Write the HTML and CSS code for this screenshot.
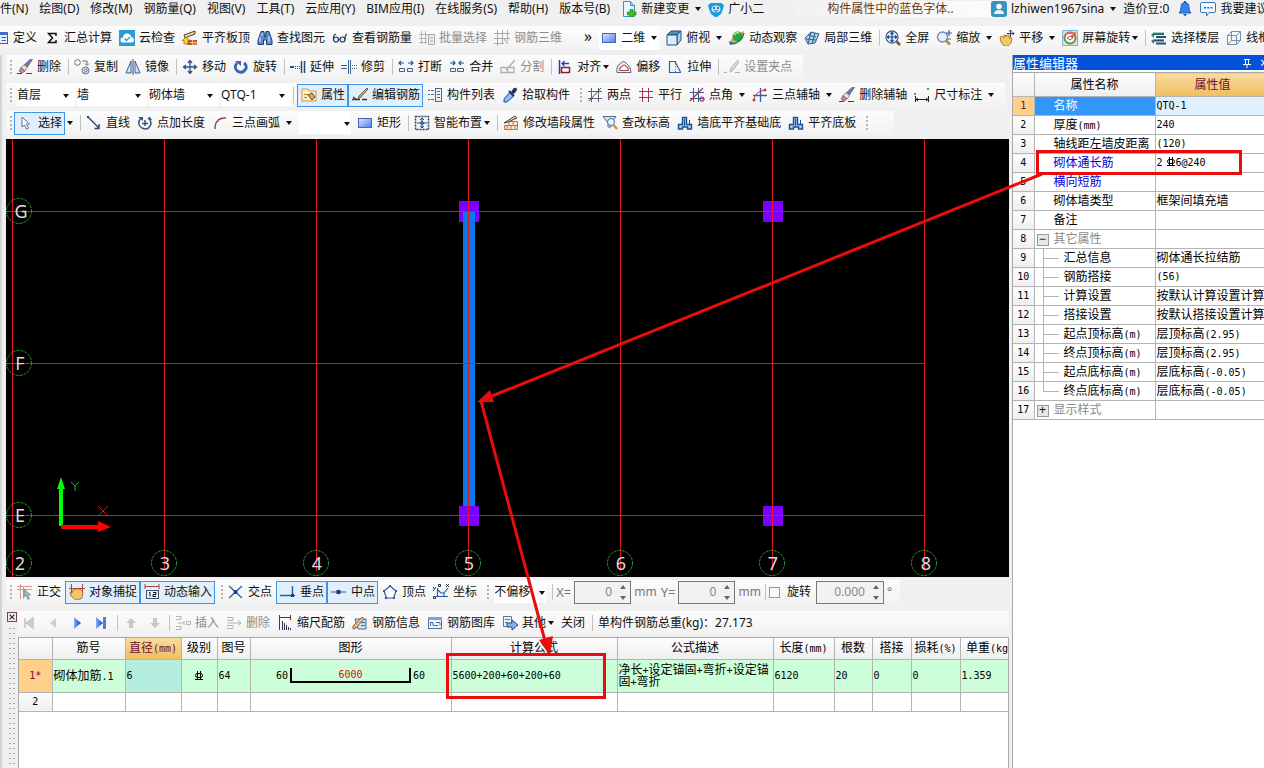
FILE: index.html
```html
<!DOCTYPE html>
<html lang="zh-CN">
<head>
<meta charset="utf-8">
<title>钢筋算量</title>
<link rel="stylesheet" href="styles.css">
</head>
<body>
<svg class="defs" aria-hidden="true">
<defs>
<linearGradient id="gb" x1="0" y1="0" x2="1" y2="1"><stop offset="0" stop-color="#dbe7ff"/><stop offset="1" stop-color="#4f7bea"/></linearGradient>
<linearGradient id="gp" x1="0" y1="0" x2="1" y2="0"><stop offset="0" stop-color="#7fb0ff"/><stop offset="1" stop-color="#0b3fd0"/></linearGradient>
</defs>
<symbol id="newdoc" viewBox="0 0 16 16"><path d="M2.500.500h7l4 4v11h-11z" fill="#e9f6ff" stroke="#3a90cc"/><path d="M9.500.500v4h4" fill="#9fd0f2" stroke="#3a90cc"/><path d="M9 8.500h3v2.500h3v3h-3v2H9v-2H6.500v-3H9z" fill="#3dc02c" stroke="#1c7d15" stroke-width=".7"/></symbol>
<symbol id="robot" viewBox="0 0 16 16"><path d="M0 4l3-2h10l3 2-1 4-2 5-4 3H7l-4-3-2-5z" fill="#189be0"/><ellipse cx="8" cy="8" rx="4.500" ry="3.500" fill="#c4e8fb"/><circle cx="6" cy="7" r="1" fill="#0b4f80"/><circle cx="10" cy="7" r="1" fill="#0b4f80"/><path d="M6 9.500q2 1.500 4 0" stroke="#0767a8" fill="none"/></symbol>
<symbol id="user" viewBox="0 0 16 16"><rect width="16" height="16" rx="3" fill="#3993bd"/><circle cx="8" cy="5.500" r="2.800" fill="#fff"/><path d="M3 13q0-4 5-4t5 4z" fill="#e5f4fb"/></symbol>
<symbol id="bell" viewBox="0 0 16 16"><path d="M8 1.500q4 0 4 5 0 4 2 5.500H2q2-1.500 2-5.500 0-5 4-5z" fill="#3484ee" stroke="#1b5dc0"/><path d="M6 13h4l-2 2.500zM7 0h2v2H7z" fill="#1b5dc0"/></symbol>
<symbol id="chat" viewBox="0 0 16 16"><path d="M2 1.500h12q1.500 0 1.500 1.500v7q0 1.500-1.500 1.500H9L6.500 15v-3.500H2Q.500 11.500.500 10V3Q.500 1.500 2 1.500z" fill="#f4f9ff" stroke="#3a78b8"/><path d="M4 6h2v1.500H4zM7.200 6h2v1.500h-2zM10.500 6h2v1.500h-2z" fill="#2b67a8"/></symbol>
<symbol id="define" viewBox="0 0 16 16"><rect x="1.500" y="2.500" width="13" height="11" fill="#eef4ff" stroke="#315fb0"/><path d="M1 2h14v3H1z" fill="#3c70cc"/><path d="M3.500 7.500h3M3.500 10.500h3M8.500 7.500H13M8.500 10.500H13" stroke="#315fb0"/></symbol>
<symbol id="sigma" viewBox="0 0 16 16"><path d="M12 6V3.500H4.500L8.500 8l-4 4.500H12V10" fill="none" stroke="#111" stroke-width="1.500"/></symbol>
<symbol id="cloud" viewBox="0 0 16 16"><rect width="16" height="16" fill="#2b9bd6"/><path d="M3.500 12.500Q1 12 1.500 9.500 2 7.500 4 7.500 4.500 3.500 8 3.500t4.300 3.500Q15 7.500 15 10t-2.500 2.500z" fill="#fff"/><path d="M5.500 8.500l2 2 3.500-3.500" fill="none" stroke="#2b9bd6" stroke-width="1.400"/></symbol>
<symbol id="slabtop" viewBox="0 0 16 16"><path d="M2 5l11-4v3L3 8z" fill="#f4d56d" stroke="#454545"/><path d="M5 10h10v5H5z" fill="#bf5b23"/><path d="M8 12.500h7M10.500 10v5M13 12v3" stroke="#f5b78c"/><path d="M0 10.500l4-3 4 3H6v3.500H2v-3.500z" fill="#ffd42a" stroke="#806000" stroke-width=".6"/></symbol>
<symbol id="binoc" viewBox="0 0 16 16"><path d="M4 1.500h3l.500 5.500h1L9 1.500h3l3 9v4h-5.500V10h-3v4.500H1v-4z" fill="#5b8ad0" stroke="#233f78"/><path d="M3 7v5M12 6v6M5 3v3" stroke="#dcecff"/></symbol>
<symbol id="glasses" viewBox="0 0 16 16"><circle cx="4" cy="9.500" r="2.500" fill="#ddf0ff" stroke="#26384f" stroke-width="1.200"/><circle cx="10.500" cy="9.500" r="2.500" fill="#ddf0ff" stroke="#26384f" stroke-width="1.200"/><path d="M1.500 9Q1 5 4 4M13 9.500Q13 5 15 4M6.500 9.500H8" fill="none" stroke="#26384f" stroke-width="1.200"/></symbol>
<symbol id="batch" viewBox="0 0 16 16"><path d="M0 4.500h10M0 8.500h8M0 12.500h8M2.500 1v13M6.500 1v13" stroke="#b5b5b5" fill="none"/><path d="M9.500 4.500h6v10h-6z" fill="#eee" stroke="#aaa"/><path d="M11 8h3M11 11h3" stroke="#aaa"/></symbol>
<symbol id="grid3" viewBox="0 0 16 16"><path d="M0 3.500h16M0 8.500h16M0 13.500h10M3.500 0v16M8.500 0v14M13.500 0v11" stroke="#aaa" fill="none"/><path d="M10 9l4 5" stroke="#999"/></symbol>
<symbol id="rect" viewBox="0 0 16 16"><rect x="1.500" y="3.500" width="13" height="9" fill="url(#gb)" stroke="#4a65b8"/></symbol>
<symbol id="cube" viewBox="0 0 16 16"><path d="M1 5l4-4h10l-4 4z" fill="#3e93bf" stroke="#2b4e80"/><path d="M11 5l4-4v9l-4 5z" fill="#a9d4e8" stroke="#2b4e80"/><path d="M1 5h10v10H1z" fill="#dcecf8" stroke="#2b4e80"/></symbol>
<symbol id="orbit" viewBox="0 0 16 16"><path d="M1 13Q3 4 15 1q-1 9-9 11z" fill="#e8a33d"/><circle cx="8.500" cy="6.500" r="5" fill="#2aa047"/><path d="M5 5q2-3 5-2" fill="none" stroke="#b3f2a5" stroke-width="1.500"/><path d="M2 14Q13 13 15 3" fill="none" stroke="#2d7f3f" stroke-width="1.300"/><path d="M0 11l1 4 4-2z" fill="#335cb3"/></symbol>
<symbol id="part3" viewBox="0 0 16 16"><path d="M1 8l6-6 8 2-4 9-7 1z" fill="#a9d4e8" stroke="#315f91"/><path d="M4 5l8 2M7 2L4 14M11 3L8 14M2 9l10 1" stroke="#315f91" fill="none"/></symbol>
<symbol id="full" viewBox="0 0 16 16"><circle cx="7" cy="7" r="6" fill="#e4f0ff" stroke="#54688c" stroke-width="1.300"/><path d="M7 2v10M2 7h10M5.500 4L7 2.300 8.500 4M5.500 10L7 11.700 8.500 10M4 5.500L2.300 7 4 8.500M10 5.500L11.700 7 10 8.500" fill="none" stroke="#1b469b" stroke-width="1.200"/><path d="M11.500 11.500L15 15" stroke="#7c5530" stroke-width="2.500"/></symbol>
<symbol id="zoomi" viewBox="0 0 16 16"><circle cx="6.500" cy="7" r="5" fill="#e6f1ff" stroke="#6f87ab" stroke-width="1.300"/><path d="M10 10.500l4 4" stroke="#c08438" stroke-width="2.600"/><path d="M13 0v6M10 3h6M15 9h-4" stroke="#2f5fae" stroke-width="1.200"/></symbol>
<symbol id="pan" viewBox="0 0 16 16"><path d="M1 7l2-1 2 2V5h2v2l1-2h2v3l3 0-1 5-3 3H5L2 12z" fill="#f5c867" stroke="#9c6d20" stroke-width=".8"/><path d="M11.500 0v7M8 3.500h7M10 1.500L11.500 0 13 1.500M13.500 2L15 3.500 13.500 5" fill="none" stroke="#345"/></symbol>
<symbol id="srot" viewBox="0 0 16 16"><rect x=".500" y=".500" width="15" height="15" fill="#e9dcc9" stroke="#7db4d8"/><circle cx="8" cy="8" r="5.500" fill="#fff" stroke="#36a055" stroke-width="1.800"/><path d="M2.500 8a5.500 5.500 0 0 1 9-4M13 2v4H9" fill="none" stroke="#e0665d" stroke-width="1.800"/><path d="M5 8l3-2 3 2-3 2z" fill="none" stroke="#d6453a"/></symbol>
<symbol id="floors" viewBox="0 0 16 16"><path d="M3 4h10M5 7h10M3 10.500h10M5 13.500h10" stroke="#23537c" stroke-width="2"/><path d="M3 3h10M5 9.500h8" stroke="#49b26c"/><path d="M0 5l3-3v6zM0 11l3-2v5z" fill="#347f6a"/></symbol>
<symbol id="wire" viewBox="0 0 16 16"><path d="M1.500 5.500h9v9h-9zM1.500 5.500l4-4h9l-4 4M14.500 1.500v9l-4 4M5.500 1.500v9h9M5.500 10.500l-4 4" fill="none" stroke="#7491ad"/></symbol>
<symbol id="brush" viewBox="0 0 16 16"><path d="M15.500 0.500L10 8.500 7 6l6.500-6z" fill="#6a7fb0" stroke="#394d78" stroke-width=".6"/><path d="M7 5.500l3.500 3L8 12 4 8.500z" fill="#f0dfc6" stroke="#7b6450" stroke-width=".7"/><path d="M4 8.500L8 12l-2 1.500H4L2 12z" fill="#b98aa9" stroke="#6b4660" stroke-width=".6"/><path d="M0 14.500h5M9 14.500h6" stroke="#24468c" stroke-width="1.200"/></symbol>
<symbol id="copy" viewBox="0 0 16 16"><circle cx="3.500" cy="3.500" r="2.800" fill="#fff" stroke="#5d7591"/><circle cx="11.500" cy="11.500" r="3.500" fill="#dfe8f0" stroke="#5d7591"/><path d="M9.500 11.500l4-2M10 13.500l4-2M8 2h5v4M11 4.500l2 2 2-2" fill="none" stroke="#5d7591"/></symbol>
<symbol id="mirror" viewBox="0 0 16 16"><path d="M6 2v12H1zM10 2v12h5z" fill="#d6e6f7" stroke="#3b5f93"/><path d="M8 0v16" stroke="#304b7b"/></symbol>
<symbol id="move" viewBox="0 0 16 16"><path d="M8 2v12M2 8h12M6 4l2-2.500L10 4M6 12l2 2.500 2-2.500M4 6L1.500 8 4 10M12 6l2.500 2-2.500 2" fill="none" stroke="#315384" stroke-width="1.300"/></symbol>
<symbol id="rotate" viewBox="0 0 16 16"><path d="M4 4Q0 9 5 12.500 10 15 13 9.500 14 6 11 4" fill="none" stroke="#3564b8" stroke-width="2.800"/><path d="M2 2h6v5z" fill="#3564b8"/></symbol>
<symbol id="extend" viewBox="0 0 16 16"><path d="M0 8h4" stroke="#1e4f9f" stroke-width="2"/><path d="M5 7.500h5M5 9.500h5" stroke="#1e4f9f" stroke-dasharray="1 1"/><path d="M11.500 2v12M14.500 2v12" stroke="#25497e" stroke-width="1.500"/></symbol>
<symbol id="trim" viewBox="0 0 16 16"><path d="M0 6.500h6M0 9.500h6M7.500 1v14M9.500 1v14" stroke="#35618e"/><path d="M11 6.500h5M11 9.500h5" stroke="#35618e" stroke-dasharray="1 1"/></symbol>
<symbol id="break" viewBox="0 0 16 16"><path d="M1 4h5M10 4h5M3 2L1 4l2 2M13 2l2 2-2 2" fill="none" stroke="#2a4f9b" stroke-width="1.200"/><path d="M1.500 9.500h5v3h-5zM9.500 9.500h5v3h-5z" fill="none" stroke="#45628b"/></symbol>
<symbol id="merge" viewBox="0 0 16 16"><path d="M1 4h5M10 4h5M4 2l2 2-2 2M12 2l-2 2 2 2" fill="none" stroke="#2a4f9b" stroke-width="1.200"/><path d="M1.500 9.500h5v3h-5zM8.500 9.500h6v3h-6z" fill="none" stroke="#45628b"/></symbol>
<symbol id="split" viewBox="0 0 16 16"><path d="M1 8.500h13v5H1zM7.500 8.500v5M15 1L6 11" fill="none" stroke="#b0b0b0" stroke-width="1.300"/></symbol>
<symbol id="align" viewBox="0 0 16 16"><path d="M2.500 1v14" stroke="#2043b7" stroke-width="1.500"/><rect x="4.500" y="8.500" width="8" height="5" fill="#fff" stroke="#8c1d2f" stroke-width="1.500"/><path d="M5 4.500h7M7.500 2L5 4.500 7.500 7" fill="none" stroke="#2043b7" stroke-width="1.300"/></symbol>
<symbol id="offset" viewBox="0 0 16 16"><path d="M1 13.500Q0 7 4 5q3-5 7 0 4 3 4 8.500z" fill="#e8eef4" stroke="#536b85"/><path d="M4 11.500q-1-3 2-4 2-3 4 0 3 1 2 4z" fill="#fff" stroke="#c04444" stroke-width="1.200"/></symbol>
<symbol id="stretch" viewBox="0 0 16 16"><path d="M8 2.500H2.500v11H14M8 2.500L13.500 13" fill="none" stroke="#315f9f" stroke-width="1.200"/><path d="M8.500 2v12" stroke="#315f9f" stroke-dasharray="1 1.500"/></symbol>
<symbol id="gripset" viewBox="0 0 16 16"><path d="M14 1L7 9l-1 4 3-2 6-8" fill="#ddd" stroke="#b0b0b0"/><path d="M0 13.500h3M11 13.500h5" stroke="#b0b0b0"/></symbol>
<symbol id="props" viewBox="0 0 16 16"><path d="M1 2h6l1 2h7v10H1z" fill="#fff0c5" stroke="#ca9c3d"/><path d="M3 7.500h4M3 10.500h3" stroke="#bf7a20"/><path d="M7 8l4-2 3 4-3 3z" fill="#d7a758" stroke="#67442b"/></symbol>
<symbol id="pen" viewBox="0 0 16 16"><path d="M15 1L7 9l-1 3 3-2 7-8z" fill="#d2ac63" stroke="#504939" stroke-width=".8"/><path d="M0 12.500h8M10 12.500h5M1 10l3 2" stroke="#303840" stroke-width="1.300"/></symbol>
<symbol id="list" viewBox="0 0 16 16"><path d="M1 3.500h2M4 3.500h3M1 7.500h2M4 7.500h3M1 12.500h2M4 12.500h3" stroke="#526787"/><rect x="8.500" y="1.500" width="6" height="13" fill="#e9f1fc" stroke="#526787"/><path d="M10 4.500h3M10 7.500h3M10 10.500h3" stroke="#526787"/></symbol>
<symbol id="pick" viewBox="0 0 16 16"><path d="M9 5l3-4q3-1 3 2l-3 4z" fill="#17335e"/><path d="M8 5l4 4-7 6H2v-3z" fill="#8db9ee" stroke="#214f96"/><path d="M7 4l5 5" stroke="#17335e" stroke-width="2"/></symbol>
<symbol id="twopt" viewBox="0 0 16 16"><path d="M1 4.500h14M1 11.500h14M4.500 1v14M11.500 1v14" stroke="#59608a"/><path d="M2 14L14 1" stroke="#315f3f"/></symbol>
<symbol id="para" viewBox="0 0 16 16"><path d="M1 4.500h14M1 10.500h14" stroke="#315f9f"/><path d="M4.500 1v14M10.500 1v14" stroke="#9b344a"/></symbol>
<symbol id="ptang" viewBox="0 0 16 16"><path d="M1 5.500h14M1 11.500h14M4.500 1v14M9.500 1v14" stroke="#315f9f"/><path d="M1 14L14 1M11 12a2 2 0 1 0 4 0 2 2 0 1 0-4 0" fill="none" stroke="#b32d45" stroke-width="1.200"/></symbol>
<symbol id="threeax" viewBox="0 0 16 16"><path d="M1 8.500h14M8.500 1v14" stroke="#315f9f" stroke-width="1.300"/><path d="M2 14Q2 4 14 3" fill="none" stroke="#c64037"/><circle cx="2" cy="13" r="1.500" fill="#c64037"/><circle cx="13" cy="3" r="1.500" fill="#c64037"/></symbol>
<symbol id="dim" viewBox="0 0 16 16"><path d="M1.500 9v6M14.500 9v6M1 12.500h13M4 11l-2 1.500L4 14M12 11l2 1.500-2 1.500" fill="none" stroke="#222"/><path d="M0 6h2v2H0zM13 1h2v2h-2z" fill="#4aa852"/></symbol>
<symbol id="cursor" viewBox="0 0 16 16"><path d="M4 2v10l2.500-2 2 4 2-1-2-4h3z" fill="#fff" stroke="#6e6e80"/></symbol>
<symbol id="line" viewBox="0 0 16 16"><path d="M2 2l11 11M13 9v4.500H8.500" fill="none" stroke="#24477c" stroke-width="1.400"/><path d="M1 1h2v2H1z" fill="#24477c"/></symbol>
<symbol id="ptlen" viewBox="0 0 16 16"><path d="M4 3Q-1 9 5 13q7 3 9-4 0-4-3-6M8 5v6M5 8.500h6" fill="none" stroke="#33547f" stroke-width="1.500"/><path d="M1 2h5v4zM12 1v4h3" fill="#33547f"/></symbol>
<symbol id="arc" viewBox="0 0 16 16"><path d="M3 14Q3 3 13 3" fill="none" stroke="#7b4a52" stroke-width="1.300"/><path d="M2 12h2v2H2zM5 5h2v2H5zM12 2h2v2h-2z" fill="#c57459"/></symbol>
<symbol id="smart" viewBox="0 0 16 16"><rect x="1.500" y="1.500" width="13" height="13" fill="none" stroke="#29405f" stroke-width="1.500" stroke-dasharray="2 1"/><path d="M8 3v10M3 8h10M6 5l2-2 2 2M6 11l2 2 2-2" fill="none" stroke="#29405f"/><circle cx="8" cy="8" r="2" fill="#2d69bb"/></symbol>
<symbol id="wall" viewBox="0 0 16 16"><path d="M3.500 6.500h11v8h-13v-4h13M6 6.500v4M10 6.500v4M8 10.500v4M12 10.500v4M4 10.500v4" fill="#ffe6c8" stroke="#bd7545"/><path d="M1 8l11-7 2 2L5 7z" fill="#f5cf7b" stroke="#3d4a50"/></symbol>
<symbol id="chkh" viewBox="0 0 16 16"><path d="M1 1.500h13L9 8v4H6V8z" fill="#d7e3f2" stroke="#536b91"/><circle cx="9" cy="7" r="3.500" fill="#eaf5ff" stroke="#536b91"/><path d="M11.500 10l3.500 4" stroke="#cf8b34" stroke-width="2.300"/></symbol>
<symbol id="base" viewBox="0 0 16 16"><path d="M1.500 14V9.500h4v-7h4v7h5V14h-4v-2h-5v2z" fill="#a9d1f2" stroke="#1c4d8b" stroke-width="1.400"/><path d="M7.500 4v7M12.500 5v4" fill="none" stroke="#1c4d8b"/></symbol>
<symbol id="ortho" viewBox="0 0 16 16"><path d="M0 2.500h15M3.500 0v15M0 5.500h15M6.500 3v12" stroke="#d99892"/><path d="M7 5v8l2-1.500 2 4 1.500-1-2-3.500h3z" fill="#9db5b8" stroke="#6c7880" stroke-width=".6"/></symbol>
<symbol id="osnap" viewBox="0 0 16 16"><path d="M2.500 0v9M13.500 0v9M0 4.500h16" stroke="#a8443b"/><path d="M1 8l2 1 1-3 2-1h5l3 3-1 6-4 2H7l-5-4z" fill="#f4c669" stroke="#94651b" stroke-width=".8"/></symbol>
<symbol id="dyn" viewBox="0 0 16 16"><path d="M1 2.500h14M1 0v5M15 0v5" stroke="#a8443b"/><rect x="2.500" y="6.500" width="12" height="8" fill="#e7eff8" stroke="#40526d"/><path d="M5 8.500h1v4M9 8.500h3v2H9v2h3" fill="none" stroke="#111"/></symbol>
<symbol id="cross" viewBox="0 0 16 16"><path d="M1 2l13 12M14 2L1 14" stroke="#2c5ba5" stroke-width="1.300"/><circle cx="7.500" cy="8" r="2" fill="#173a80"/></symbol>
<symbol id="perp" viewBox="0 0 16 16"><path d="M0 11.500h15M12.500 2v10" stroke="#2c5ba5" stroke-width="1.400"/><path d="M11 10h3v3h-3z" fill="#173a80"/></symbol>
<symbol id="mid" viewBox="0 0 16 16"><path d="M0 8h15" stroke="#2c5ba5"/><path d="M5.500 6h4v4h-4z" fill="#173a80"/></symbol>
<symbol id="vertex" viewBox="0 0 16 16"><path d="M8 2l6 5-2.500 7h-7L2 7z" fill="#fff" stroke="#2c5ba5" stroke-width="1.200"/><path d="M7 1h2v2H7zM1 6h2v2H1zM13 6h2v2h-2zM3 13h2v2H3zM11 13h2v2h-2z" fill="#2c5ba5"/></symbol>
<symbol id="coord" viewBox="0 0 16 16"><path d="M4.500 4v9M3 12.500h12M5 6l3 3h3l4-5M11 9v3" fill="none" stroke="#2c5ba5" stroke-width="1.200"/><path d="M0 3l1.500 2M3 3L0 7M13 0l3 3M16 0l-3 3M5.500.500h2v2h-2zM.500 12.500h2v2h-2z" fill="none" stroke="#28323f"/></symbol>
<symbol id="first" viewBox="0 0 16 16"><path d="M4 3v10M5.500 8L12 3v10z" fill="#cfcfcf" stroke="#c6c6c6" stroke-width="1.600"/></symbol>
<symbol id="prev" viewBox="0 0 16 16"><path d="M5 8l6-5v10z" fill="#cfcfcf"/></symbol>
<symbol id="play" viewBox="0 0 16 16"><path d="M5 2l7 6-7 6z" fill="url(#gp)"/></symbol>
<symbol id="last" viewBox="0 0 16 16"><path d="M3 2l7 6-7 6z" fill="url(#gp)"/><path d="M10 2h3v12h-3z" fill="#6478b8"/></symbol>
<symbol id="up" viewBox="0 0 16 16"><path d="M8 3l5 5h-3v5H6V8H3z" fill="#c8c8c8"/></symbol>
<symbol id="down" viewBox="0 0 16 16"><path d="M8 13l5-5h-3V3H6v5H3z" fill="#c8c8c8"/></symbol>
<symbol id="ins" viewBox="0 0 16 16"><path d="M1 1.500h5v3H1M1 11.500h5v3H1M3 8h6M11.500 6.500h4v3h-4zM9 6v4" fill="none" stroke="#b4b4b4"/></symbol>
<symbol id="rem" viewBox="0 0 16 16"><path d="M1 2.500h6v3H1M1 10.500h6v3H1M2 8h13M12 5.500L15 8l-3 2.500" fill="none" stroke="#b4b4b4"/></symbol>
<symbol id="scale" viewBox="0 0 16 16"><path d="M2.500 0v15M13.500 0v5M3 2.500h10" stroke="#6b2c35"/><path d="M5.500 6v9M7.500 8v7M9.500 10v5M11.500 12v3M13.500 13v2" stroke="#30384a"/></symbol>
<symbol id="info" viewBox="0 0 16 16"><path d="M3 4h11v10H6z" fill="#cce2f3" stroke="#3e6ca1"/><path d="M1 11l9-9 2 2-8 9-3 1z" fill="#e7bb6b" stroke="#665238" stroke-width=".8"/><path d="M9 7.500h4M9 10.500h4" stroke="#3e6ca1"/></symbol>
<symbol id="lib" viewBox="0 0 16 16"><rect x="1.500" y="2.500" width="13" height="11" fill="#edf3fa" stroke="#4b6f9e"/><path d="M1 2h14v3H1z" fill="#80a4d0"/><path d="M3.500 7v4M3 7.500h3v3h5M9 7.500h4v3" fill="none" stroke="#4b6f9e"/></symbol>
<symbol id="other" viewBox="0 0 16 16"><path d="M1.500 1.500h8v10h-8z" fill="#eaf2fb" stroke="#5a78a6"/><path d="M3 4.500h5M3 7.500h3" stroke="#5a78a6"/><path d="M5 8h5V5l6 5-6 5v-3H5z" fill="#87aee6" stroke="#29518f"/></symbol>
<symbol id="pin" viewBox="0 0 10 12"><path d="M2 2.500h6M3.500 2v5M6.500 2v5M1 7.500h8M5 8v3" fill="none" stroke="#fff"/></symbol>
<symbol id="rebar" viewBox="0 0 10 10"><path d="M3.500 2.500h3q2 0 2 2t-2 2h-3q-2 0-2-2t2-2zM3.500 0v8M6.500 0v8M1 8.500h8" fill="none" stroke="#000"/></symbol>
</svg>

<nav class="menu">
<button class="m clipped">文件(N)</button><button class="m">绘图(D)</button><button class="m">修改(M)</button><button class="m">钢筋量(Q)</button><button class="m">视图(V)</button><button class="m">工具(T)</button><button class="m">云应用(Y)</button><button class="m">BIM应用(I)</button><button class="m">在线服务(S)</button><button class="m">帮助(H)</button><button class="m">版本号(B)</button>
<button class="b"><svg class="i"><use href="#newdoc"/></svg>新建变更<i class="arrow"></i></button>
<button class="b"><svg class="i"><use href="#robot"/></svg>广小二</button>
<div class="notice">构件属性中的蓝色字体..</div>
<div class="account">
<button class="b"><svg class="i"><use href="#user"/></svg>lzhiwen1967sina<i class="arrow"></i></button>
<span class="beans">造价豆:0</span>
<button class="b" aria-label="通知"><svg class="i"><use href="#bell"/></svg></button>
<button class="b"><svg class="i"><use href="#chat"/></svg>我要建议</button>
</div>
</nav>

<div class="bar wide">
<button class="b cut"><svg class="i"><use href="#define"/></svg>定义</button>
<button class="b"><svg class="i"><use href="#sigma"/></svg>汇总计算</button>
<button class="b"><svg class="i"><use href="#cloud"/></svg>云检查</button>
<button class="b"><svg class="i"><use href="#slabtop"/></svg>平齐板顶</button>
<button class="b"><svg class="i"><use href="#binoc"/></svg>查找图元</button>
<button class="b"><svg class="i"><use href="#glasses"/></svg>查看钢筋量</button>
<button class="b" disabled><svg class="i"><use href="#batch"/></svg>批量选择</button>
<button class="b" disabled><svg class="i"><use href="#grid3"/></svg>钢筋三维</button>
<button class="more" aria-label="更多">»</button>
<button class="b white"><svg class="i"><use href="#rect"/></svg>二维<i class="arrow"></i></button>
<button class="b"><svg class="i"><use href="#cube"/></svg>俯视<i class="arrow"></i></button>
<button class="b"><svg class="i"><use href="#orbit"/></svg>动态观察</button>
<button class="b"><svg class="i"><use href="#part3"/></svg>局部三维</button>
<i class="sep"></i>
<button class="b"><svg class="i"><use href="#full"/></svg>全屏</button>
<button class="b"><svg class="i"><use href="#zoomi"/></svg>缩放<i class="arrow"></i></button>
<button class="b"><svg class="i"><use href="#pan"/></svg>平移<i class="arrow"></i></button>
<button class="b"><svg class="i"><use href="#srot"/></svg>屏幕旋转<i class="arrow near"></i></button>
<i class="sep"></i>
<button class="b"><svg class="i"><use href="#floors"/></svg>选择楼层</button>
<button class="b"><svg class="i"><use href="#wire"/></svg>线框</button>
</div>

<div class="shell">
<main class="work">
<div class="bars">
<div class="bar">
<i class="grip"></i>
<button class="b"><svg class="i"><use href="#brush"/></svg>删除</button><i class="sep"></i>
<button class="b"><svg class="i"><use href="#copy"/></svg>复制</button>
<button class="b"><svg class="i"><use href="#mirror"/></svg>镜像</button><i class="sep"></i>
<button class="b"><svg class="i"><use href="#move"/></svg>移动</button>
<button class="b"><svg class="i"><use href="#rotate"/></svg>旋转</button><i class="sep"></i>
<button class="b"><svg class="i"><use href="#extend"/></svg>延伸</button>
<button class="b"><svg class="i"><use href="#trim"/></svg>修剪</button><i class="sep"></i>
<button class="b"><svg class="i"><use href="#break"/></svg>打断</button>
<button class="b"><svg class="i"><use href="#merge"/></svg>合并</button>
<button class="b" disabled><svg class="i"><use href="#split"/></svg>分割</button><i class="sep"></i>
<button class="b"><svg class="i"><use href="#align"/></svg>对齐<i class="arrow near"></i></button>
<button class="b"><svg class="i"><use href="#offset"/></svg>偏移</button>
<button class="b"><svg class="i"><use href="#stretch"/></svg>拉伸</button><i class="sep"></i>
<button class="b" disabled><svg class="i"><use href="#gripset"/></svg>设置夹点</button>
</div>
<div class="bar">
<i class="grip"></i>
<span class="combo floor"><select aria-label="楼层"><option>首层</option></select></span>
<span class="combo"><select aria-label="构件大类"><option>墙</option></select></span>
<span class="combo"><select aria-label="构件类型"><option>砌体墙</option></select></span>
<span class="combo"><select aria-label="构件名称"><option>QTQ-1</option></select></span>
<i class="sep lead"></i>
<button class="b on"><svg class="i"><use href="#props"/></svg>属性</button><button class="b on last"><svg class="i"><use href="#pen"/></svg>编辑钢筋</button>
<button class="b"><svg class="i"><use href="#list"/></svg>构件列表</button>
<button class="b"><svg class="i"><use href="#pick"/></svg>拾取构件</button>
<i class="grip inner"></i>
<button class="b"><svg class="i"><use href="#twopt"/></svg>两点</button>
<button class="b"><svg class="i"><use href="#para"/></svg>平行</button>
<button class="b"><svg class="i"><use href="#ptang"/></svg>点角<i class="arrow"></i></button>
<button class="b"><svg class="i"><use href="#threeax"/></svg>三点辅轴<i class="arrow"></i></button>
<button class="b"><svg class="i"><use href="#brush"/></svg>删除辅轴</button>
<button class="b"><svg class="i"><use href="#dim"/></svg>尺寸标注<i class="arrow"></i></button>
</div>
<div class="bar">
<i class="grip snug"></i>
<button class="b on"><svg class="i"><use href="#cursor"/></svg>选择</button><button class="b drop" aria-label="选择方式"><i class="arrow"></i></button><i class="sep"></i>
<button class="b"><svg class="i"><use href="#line"/></svg>直线</button>
<button class="b"><svg class="i"><use href="#ptlen"/></svg>点加长度</button>
<button class="b"><svg class="i"><use href="#arc"/></svg>三点画弧<i class="arrow"></i></button>
<span class="combo small"><select aria-label="画法"><option></option></select></span>
<button class="b"><svg class="i"><use href="#rect"/></svg>矩形</button><i class="sep"></i>
<button class="b"><svg class="i"><use href="#smart"/></svg>智能布置<i class="arrow near"></i></button><i class="sep"></i>
<button class="b"><svg class="i"><use href="#wall"/></svg>修改墙段属性</button>
<button class="b"><svg class="i"><use href="#chkh"/></svg>查改标高</button>
<button class="b"><svg class="i"><use href="#base"/></svg>墙底平齐基础底</button>
<button class="b"><svg class="i"><use href="#base"/></svg>平齐底板</button>
<i class="grip inner tail"></i>
</div>
</div>

<svg class="canvas" role="img" aria-label="轴网平面图">
<g fill="#7b00ff"><path d="M453 62h20v21h-20zM757 62h20v21h-20zM453 367h20v20h-20zM757 367h20v20h-20z"/></g>
<path d="M457 72h12v295h-12z" fill="#0a78ea"/>
<g fill="#e01818" shape-rendering="crispEdges">
<path d="M6 0h1v438h-1zM158 0h1v432h-1zM310 0h1v432h-1zM462 0h1v432h-1zM614 0h1v432h-1zM766 0h1v432h-1zM918 0h1v432h-1z"/>
<rect x="0" y="72" width="919" height="1"/><rect x="0" y="224" width="919" height="1"/><rect x="0" y="376" width="919" height="1"/>
</g>
<g fill="none" stroke="#1f9a2a" stroke-dasharray="3 1"><circle cx="13" cy="72" r="12.500"/><circle cx="13" cy="224" r="12.500"/><circle cx="13" cy="376" r="12.500"/><circle cx="13" cy="424" r="12.500"/><circle cx="158" cy="424" r="12.500"/><circle cx="310" cy="424" r="12.500"/><circle cx="462" cy="424" r="12.500"/><circle cx="614" cy="424" r="12.500"/><circle cx="766" cy="424" r="12.500"/><circle cx="918" cy="424" r="12.500"/></g>
<g class="axis"><text x="15" y="79">G</text><text x="14" y="231">F</text><text x="14" y="383">E</text><text x="14" y="431">2</text><text x="159" y="431">3</text><text x="311" y="431">4</text><text x="463" y="431">5</text><text x="615" y="431">6</text><text x="767" y="431">7</text><text x="920" y="431">8</text></g>
<path d="M53 387V350h-2l4-12 4 12h-2v37z" fill="#0f0"/><path d="M55 386h37v-4l13 6-13 5v-3H55z" fill="#f00"/>
<path d="M65 343l4 4 4-4M69 347v5" stroke="#1fb53a" fill="none"/><path d="M92 367l10 10M102 367l-10 10" stroke="#c91818"/>
</svg>

<div class="bar snap">
<i class="grip"></i>
<button class="b tight"><svg class="i"><use href="#ortho"/></svg>正交</button>
<button class="b on"><svg class="i"><use href="#osnap"/></svg>对象捕捉</button><button class="b on"><svg class="i"><use href="#dyn"/></svg>动态输入</button>
<i class="grip mid"></i>
<button class="b tight"><svg class="i"><use href="#cross"/></svg>交点</button>
<button class="b on"><svg class="i"><use href="#perp"/></svg>垂点</button><button class="b on last"><svg class="i"><use href="#mid"/></svg>中点</button>
<button class="b"><svg class="i"><use href="#vertex"/></svg>顶点</button>
<button class="b"><svg class="i"><use href="#coord"/></svg>坐标</button>
<i class="grip inner"></i>
<span class="combo offset"><select aria-label="偏移方式"><option>不偏移</option></select></span>
<i class="sep lead"></i>
<label class="num" for="ox">X=</label><span class="spin"><input id="ox" value="0" disabled><i class="ud"></i></span><span class="unit">mm</span>
<label class="num" for="oy">Y=</label><span class="spin"><input id="oy" value="0" disabled><i class="ud"></i></span><span class="unit">mm</span>
<i class="sep lead"></i>
<label class="check"><input type="checkbox">旋转</label>
<span class="spin big"><input aria-label="旋转角度" value="0.000" disabled><i class="ud"></i></span><span class="unit">°</span>
</div>

<section class="editor">
<div class="dock"><button class="x" aria-label="关闭面板"><svg viewBox="0 0 10 10"><path d="M2 2l6 6M8 2L2 8" stroke="#4b2530" stroke-width="1.500"/></svg></button><i class="dots"></i></div>
<div class="pane">
<div class="bar edit">
<button class="nav" aria-label="首条" disabled><svg class="i"><use href="#first"/></svg></button><button class="nav" aria-label="上一条" disabled><svg class="i"><use href="#prev"/></svg></button><button class="nav" aria-label="下一条"><svg class="i"><use href="#play"/></svg></button><button class="nav" aria-label="末条"><svg class="i"><use href="#last"/></svg></button><i class="sep"></i><button class="nav" aria-label="上移" disabled><svg class="i"><use href="#up"/></svg></button><button class="nav end" aria-label="下移" disabled><svg class="i"><use href="#down"/></svg></button><i class="sep"></i>
<button class="b" disabled><svg class="i"><use href="#ins"/></svg>插入</button>
<button class="b" disabled><svg class="i"><use href="#rem"/></svg>删除</button>
<button class="b"><svg class="i"><use href="#scale"/></svg>缩尺配筋</button>
<button class="b"><svg class="i"><use href="#info"/></svg>钢筋信息</button>
<button class="b"><svg class="i"><use href="#lib"/></svg>钢筋图库</button>
<button class="b"><svg class="i"><use href="#other"/></svg>其他<i class="arrow near"></i></button>
<button class="b">关闭</button><i class="sep"></i>
<output>单构件钢筋总重(kg)：27.173</output>
</div>
<div class="sheet">
<table class="bars-table">
<colgroup><col class="w33"><col class="w73"><col class="w56"><col class="w36"><col class="w33"><col class="w201"><col class="w166"><col class="w156"><col class="w61"><col class="w38"><col class="w39"><col class="w49"><col class="w60"></colgroup>
<thead><tr><th></th><th>筋号</th><th class="hot">直径<span class="n">(mm)</span></th><th>级别</th><th>图号</th><th>图形</th><th>计算公式</th><th>公式描述</th><th>长度<span class="n">(mm)</span></th><th>根数</th><th>搭接</th><th>损耗<span class="n">(%)</span></th><th>单重<span class="n">(kg)</span></th></tr></thead>
<tbody>
<tr class="sel"><th class="n">1*</th><td>砌体加筋<span class="n">.1</span></td><td class="n cur">6</td><td class="mid"><svg class="rb"><use href="#rebar"/></svg></td><td class="n">64</td><td><div class="shape"><span class="n">60</span><span class="u n">6000</span><span class="n">60</span></div></td><td class="n">5600+200+60+200+60</td><td class="desc">净长<span class="n">+</span>设定锚固<span class="n">+</span>弯折<span class="n">+</span>设定锚固<span class="n">+</span>弯折</td><td class="n">6120</td><td class="n">20</td><td class="n">0</td><td class="n">0</td><td class="n">1.359</td></tr>
<tr><th class="n">2</th><td></td><td class="curline"></td><td></td><td></td><td></td><td></td><td></td><td></td><td></td><td></td><td></td><td></td></tr>
</tbody>
</table>
</div>
</div>
</section>
</main>

<aside class="panel">
<header><h2>属性编辑器</h2><button aria-label="固定"><svg class="pin"><use href="#pin"/></svg></button><button class="close" aria-label="关闭">×</button></header>
<div class="props">
<table>
<colgroup><col class="c1"><col class="c2"><col class="c3"></colgroup>
<thead><tr><th></th><th>属性名称</th><th class="hot">属性值</th></tr></thead>
<tbody>
<tr class="active"><th>1</th><td class="nm">名称</td><td class="n">QTQ-1</td></tr>
<tr><th>2</th><td class="nm">厚度<span class="n">(mm)</span></td><td class="n">240</td></tr>
<tr><th>3</th><td class="nm">轴线距左墙皮距离</td><td class="n">(120)</td></tr>
<tr><th>4</th><td class="nm blue">砌体通长筋</td><td class="n">2<svg class="rb gap"><use href="#rebar"/></svg>6@240</td></tr>
<tr><th>5</th><td class="nm blue">横向短筋</td><td></td></tr>
<tr><th>6</th><td class="nm">砌体墙类型</td><td>框架间填充墙</td></tr>
<tr><th>7</th><td class="nm">备注</td><td></td></tr>
<tr><th>8</th><td class="grp"><button class="tog" aria-label="收起">−</button>其它属性</td><td></td></tr>
<tr><th>9</th><td class="sub"><i></i>汇总信息</td><td>砌体通长拉结筋</td></tr>
<tr><th>10</th><td class="sub"><i></i>钢筋搭接</td><td class="n">(56)</td></tr>
<tr><th>11</th><td class="sub"><i></i>计算设置</td><td>按默认计算设置计算</td></tr>
<tr><th>12</th><td class="sub"><i></i>搭接设置</td><td>按默认搭接设置计算</td></tr>
<tr><th>13</th><td class="sub"><i></i>起点顶标高<span class="n">(m)</span></td><td>层顶标高<span class="n">(2.95)</span></td></tr>
<tr><th>14</th><td class="sub"><i></i>终点顶标高<span class="n">(m)</span></td><td>层顶标高<span class="n">(2.95)</span></td></tr>
<tr><th>15</th><td class="sub"><i></i>起点底标高<span class="n">(m)</span></td><td>层底标高<span class="n">(-0.05)</span></td></tr>
<tr><th>16</th><td class="sub end"><i></i>终点底标高<span class="n">(m)</span></td><td>层底标高<span class="n">(-0.05)</span></td></tr>
<tr><th>17</th><td class="grp"><button class="tog" aria-label="展开">+</button>显示样式</td><td></td></tr>
</tbody>
</table>
</div>
</aside>
</div>

<svg class="notes" aria-hidden="true">
<g fill="none" stroke="#e80c0c" stroke-width="3"><path d="M1037.500 151.500h203v22h-203zM447.500 654.500h157v43h-157z"/><path d="M1042 174L492 396M481 401l64 240"/></g>
<path d="M477 402l13-12 4 12zM539 640l14-4-3 20z" fill="#e80c0c"/>
</svg>
</body>
</html>
```
FILE: styles.css
```css
* { box-sizing: border-box; }
body {
  margin: 0;
  min-height: 100vh;
  display: flex;
  flex-direction: column;
  position: relative;
  overflow: hidden;
  background: #f0f0f0;
  color: #111;
  font: 12px/16px "Noto Sans", "Noto Sans CJK SC", sans-serif;
  white-space: nowrap;
}
button, select, input { font: inherit; color: inherit; }
button { background: none; border: 0; padding: 0; margin: 0; white-space: nowrap; flex: none; }
.defs { position: absolute; width: 0; height: 0; }
.i { width: 16px; height: 16px; flex: none; display: block; }

/* menu */
.menu { display: flex; align-items: center; height: 18px; margin-bottom: 8px; }
.m { margin-right: 11px; }
.m.clipped { margin-left: -12px; }
.notice {
  flex: 1;
  margin-left: 24px;
  padding-left: 32px;
  color: #6b3a12;
  background: linear-gradient(90deg, #f2f2f2, #fbfbfb);
}
.account { display: flex; align-items: center; width: 273px; }
.beans { margin-right: 8px; }

/* tool bars */
.bar {
  display: flex;
  align-items: center;
  height: 24px;
  width: max-content;
  padding: 0 4px 0 1px;
  background: linear-gradient(#fcfcfc, #f2f2f2);
}
.bar.wide { width: auto; padding: 0; margin-bottom: 5px; overflow: hidden; }
.b { display: flex; align-items: center; gap: 4px; margin-right: 7px; height: 22px; }
.b.cut { margin-left: -7px; }
.b:disabled { color: #8c8c8c; }
.b.tight { margin-right: 4px; }
.b.on {
  margin-right: 0;
  height: 23px;
  padding: 0 2px 0 3px;
  border: 1px solid #3c96e8;
  background: #e1eefb;
}
.b.on.last { margin-right: 4px; }
.b.white { background: #fff; height: 24px; padding: 0 2px; }
.more { width: 12px; margin: 0 5px 4px 13px; font-size: 16px; line-height: 16px; }
.arrow {
  margin-left: 2px;
  border: 3px solid transparent;
  border-top: 4px solid #111;
  border-bottom: 0;
}
.arrow.near { margin-left: -2px; }
.sep { width: 1px; height: 16px; margin-right: 5px; background: #c2c2c2; flex: none; }
.sep.lead { margin-right: 3px; }
.grip { width: 2px; height: 14px; margin: 0 5px 0 3px; flex: none; background: repeating-linear-gradient(#b4b4b4 0 2px, transparent 2px 4px); }
.grip.snug { margin-right: 2px; }
.grip.mid { margin-left: 6px; }
.grip.tail { margin-right: 22px; }
.combo { position: relative; width: 70px; height: 22px; margin-right: 2px; background: #fff; }
.combo select {
  appearance: none;
  width: 100%;
  height: 100%;
  padding: 0 14px 0 0;
  border: 0;
  background: none;
}
.combo::after {
  content: "";
  position: absolute;
  right: 6px;
  top: 10px;
  border: 3px solid transparent;
  border-top: 4px solid #111;
  border-bottom: 0;
  pointer-events: none;
}
.combo.floor { width: 58px; }
.combo.small, .combo.offset { width: 52px; margin-right: 6px; }
.combo.small::after, .combo.offset::after { right: 1px; }

/* shell */
.shell { flex: 1; display: grid; grid-template-columns: minmax(0, 1fr) 252px; }
.work { display: flex; flex-direction: column; padding: 0 3px 0 4px; border-left: 2px solid #d4d4d4; min-width: 0; }
.bars { display: flex; flex-direction: column; gap: 4px; padding-bottom: 4px; }
.canvas { display: block; width: 100%; height: 438px; background: #000; }
.axis { fill: #dcdcdc; font: 18px "Noto Sans", sans-serif; text-anchor: middle; }
.snap { margin: 3px 0 7px; }
.num { color: #777; margin-right: 3px; font-size: 13px; }
.unit { color: #777; margin: 0 4px 0 3px; }
.spin { position: relative; width: 57px; height: 23px; border: 1px solid #777; background: #f2f2f2; display: flex; }
.spin.big { width: 68px; }
.spin input { width: 100%; min-width: 0; border: 0; padding: 0 18px 0 0; text-align: right; background: none; color: #888; }
.ud { position: absolute; right: 4px; top: 3px; width: 6px; height: 15px; display: flex; flex-direction: column; justify-content: space-between; }
.ud::before, .ud::after { content: ""; border: 3px solid transparent; }
.ud::before { border-top: 0; border-bottom: 4px solid #666; }
.ud::after { border-bottom: 0; border-top: 4px solid #666; }
.check { display: flex; align-items: center; gap: 7px; margin-right: 5px; }
.check input { appearance: none; width: 11px; height: 11px; margin: 0; border: 1px solid #999; background: #fafafa; }

/* rebar editor */
.editor { flex: 1; display: flex; min-height: 0; }
.dock { width: 12px; display: flex; flex-direction: column; flex: none; }
.x { width: 10px; height: 10px; margin: 1px 0 4px 1px; border: 1px solid #6f4b55; background: #eee; display: flex; }
.x svg { width: 8px; height: 8px; }
.dots { flex: 1; margin: 0 2px 0 2px; background: radial-gradient(circle, #a8a8a8 1px, transparent 1px) 0 0 / 4px 5px; }
.pane { flex: 1; min-width: 0; display: flex; flex-direction: column; }
.edit { width: auto; padding-left: 3px; margin-bottom: 2px; }
.nav { width: 24px; display: flex; }
.nav.end { width: 22px; }
.sheet { flex: 1; border: 1px solid #a9a9a9; border-bottom: 0; background: #fff; overflow: hidden; }
table { border-collapse: collapse; table-layout: fixed; font-family: "Liberation Sans", "Noto Sans CJK SC", sans-serif; color: #000; }
th, td { padding: 0 1px; border-right: 1px solid #b4b4b4; border-bottom: 1px solid #b4b4b4; font-weight: normal; text-align: left; line-height: 14px; overflow: hidden; }
th { text-align: center; background: linear-gradient(#fdfdfd, #eee); }
.n { font-family: "DejaVu Sans Mono", monospace; font-size: 10px; }
span.n { line-height: 0; }
.hot { color: #701030; background: linear-gradient(#f9dba0, #f0bd60); }
.bars-table { width: 1001px; }
.w73 { width: 73px; } .w56 { width: 56px; } .w36 { width: 36px; } .w33 { width: 33px; }
.w201 { width: 201px; } .w166 { width: 166px; } .w156 { width: 156px; } .w61 { width: 61px; }
.w38 { width: 38px; } .w39 { width: 39px; } .w49 { width: 49px; } .w60 { width: 60px; }
.bars-table thead tr { height: 21px; }
.bars-table tbody tr { height: 19px; }
.bars-table tbody tr.sel { height: 33px; }
.sel td { background: #ccffd9; }
.sel th { background: #ffd08a; color: #701030; }
.bars-table td.cur { background: #b4eedf; }
.bars-table .cur, .bars-table .curline { border-left: 1px solid #000; }
.bars-table .mid { text-align: center; }
.rb { width: 10px; height: 10px; vertical-align: -1px; }
.rb.gap { margin-left: 3px; }
.bars-table .desc { white-space: normal; line-height: 12px; }
.shape { display: flex; align-items: center; justify-content: center; gap: 2px; }
.u { width: 121px; height: 15px; border: 2px solid #000; border-top: 0; color: #d01010; text-align: center; }
.shape .u { line-height: 13px; }

/* property panel */
.panel { border-left: 1px solid #a9a9a9; overflow: hidden; background: #fff; min-width: 0; }
.panel header { display: flex; align-items: center; height: 15px; background: #0452dc; color: #fff; gap: 8px; margin-bottom: 2px; }
.panel h2 { flex: 1; margin: 0; font: 13px/15px "Noto Sans CJK SC", sans-serif; }
.panel header button { height: 15px; line-height: 14px; font-size: 14px; display: flex; align-items: center; }
.panel header .close { margin-right: -4px; }
.pin { width: 10px; height: 12px; }
.props table { width: 257px; }
.c1 { width: 21px; } .c2 { width: 121px; } .c3 { width: 115px; }
.props thead tr { height: 24px; }
.props thead th { border-top: 1px solid #a9a9a9; }
.props tbody tr { height: 19px; }
.props tbody th { font: 10px/14px "DejaVu Sans Mono", monospace; }
.nm { padding-left: 19px; }
.active td { background: #e1effd; }
.active td.nm { background: #3296fa; color: #fff; }
.active th { background: #ffd08a; color: #701030; }
.blue { color: #0000d8; }
.grp { color: #8a8a8a; }
.tog { width: 12px; height: 12px; margin: 0 5px 0 1px; border: 1px solid #999; background: #e6e6e6; color: #111; line-height: 9px; vertical-align: 0; }
.sub { padding-left: 8px; line-height: 18px; }
.sub i { display: inline-block; width: 16px; height: 18px; margin-right: 5px; vertical-align: top; border-left: 1px solid #b4b4b4; background: linear-gradient(#b4b4b4, #b4b4b4) 0 9px / 100% 1px no-repeat; }
.sub.end i { border-left: 0; background: linear-gradient(#b4b4b4, #b4b4b4) 0 9px / 100% 1px no-repeat, linear-gradient(#b4b4b4, #b4b4b4) 0 0 / 1px 10px no-repeat; }

/* call-outs over the page */
.notes { position: absolute; left: 0; top: 0; width: 100%; height: 100%; overflow: visible; pointer-events: none; }
```
